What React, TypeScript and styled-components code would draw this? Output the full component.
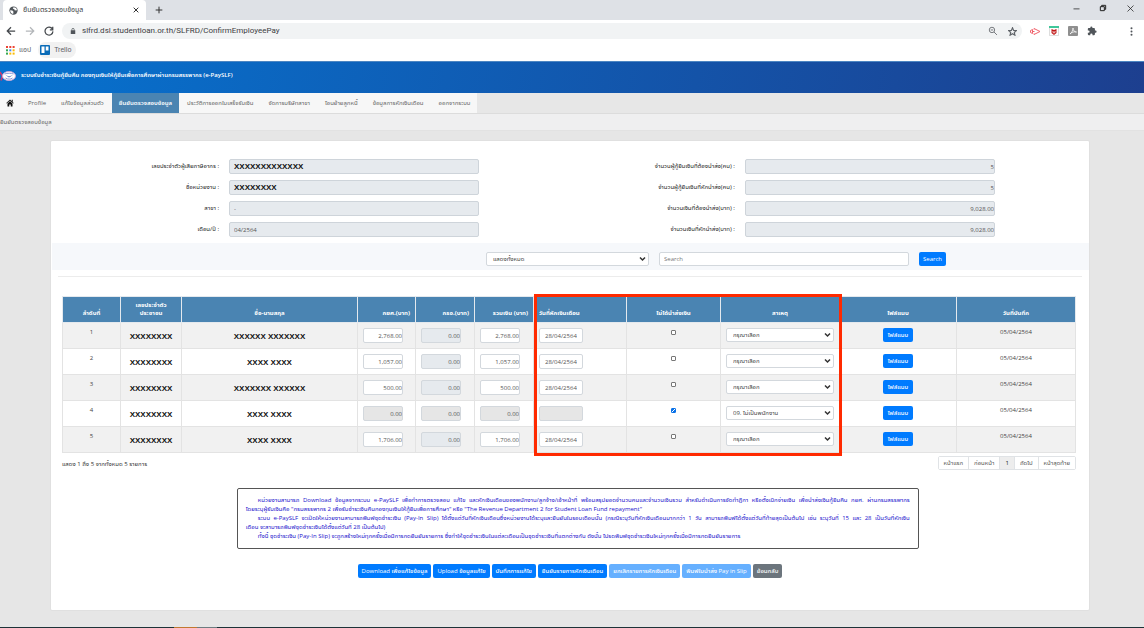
import React from "react";
import styled, { createGlobalStyle, css } from "styled-components";

const FONT = '"Open Sans", "Noto Sans Thai", "Liberation Sans", sans-serif';
const UI_FONT = 'Roboto, "Noto Sans Thai", sans-serif';

const GlobalStyle = createGlobalStyle`
  * { box-sizing: border-box; }
  html, body { margin: 0; padding: 0; }
  body { background: #e6e6e6; font-family: ${FONT}; font-size: 6px; line-height: 9px; color: #333; }
  button, input, select { font: inherit; margin: 0; }
`;

const Page = styled.div`
  min-height: 100vh;
  display: flex;
  flex-direction: column;
`;

/* ---------- browser frame ---------- */
const TabStrip = styled.div`
  height: 20px;
  background: #dee1e6;
  display: flex;
  align-items: flex-end;
  padding-left: 3px;
  font-family: ${UI_FONT};
`;
const Tab = styled.div`
  width: 143px;
  height: 20px;
  background: #fff;
  border-radius: 4px 4px 0 0;
  display: flex;
  align-items: center;
  gap: 5px;
  padding: 0 4px 0 6px;
  color: #3c4043;
`;
const TabTitle = styled.span`
  flex: 1;
  font-size: 7px;
  white-space: nowrap;
`;
const IconButton = styled.button`
  border: 0;
  padding: 0;
  background: none;
  display: flex;
  align-items: center;
  justify-content: center;
  width: 12px;
  height: 12px;
  flex: none;
`;
const NewTab = styled(IconButton)`
  margin: 0 0 4px 7px;
`;
const WindowButtons = styled.div`
  margin-left: auto;
  display: flex;
  gap: 15px;
  padding: 0 8px 6px 0;
`;
const Toolbar = styled.div`
  height: 22px;
  background: #fff;
  display: flex;
  align-items: center;
  padding: 0 7px 0 5px;
  gap: 7px;
  font-family: ${UI_FONT};
`;
const AddressBar = styled.div`
  flex: 1;
  height: 16px;
  border-radius: 8px;
  background: #f1f3f4;
  display: flex;
  align-items: center;
  gap: 7px;
  padding: 0 4px 0 5px;
`;
const SiteInfo = styled(IconButton)`
  margin-right: -4px;
`;
const Address = styled.input`
  flex: 1;
  border: 0;
  padding: 0;
  background: none;
  font-size: 8px;
  line-height: 12px;
  color: #3c4043;
  outline: none;
`;
const Extensions = styled.div`
  display: flex;
  gap: 7px;
  margin-right: 20px;
`;
const Bookmarks = styled.div`
  height: 19px;
  background: #fff;
  display: flex;
  align-items: flex-start;
  gap: 3px;
  padding: 0 4px;
  font-family: ${UI_FONT};
`;
const Bookmark = styled.a<{ $active?: boolean }>`
  display: flex;
  align-items: center;
  gap: 4px;
  height: 16px;
  padding: 0 4px 0 2px;
  border-radius: 8px;
  color: #5f6368;
  text-decoration: none;
  font-size: 7px;
  background: ${(p) => (p.$active ? "#f1f1f1" : "none")};
`;

/* ---------- site header ---------- */
const Header = styled.header`
  height: 32px;
  border-top: 1px solid #4d86c2;
  background: linear-gradient(100deg, #0672cf 0%, #1d3f8f 100%);
  color: #fff;
  display: flex;
  align-items: center;
  gap: 4px;
  padding-bottom: 4px;
`;
const SiteTitle = styled.h1`
  margin: 0;
  font-size: 6px;
  line-height: 9px;
  font-weight: 600;
`;
const Nav = styled.nav`
  height: 21px;
  border-bottom: 1px solid #dcdcdc;
  display: flex;
  background: #e7e7e7;
`;
const NavItems = styled.div`
  display: flex;
  gap: 1px;
  background: #f7f7f7;
`;
const NavLink = styled.a<{ $active?: boolean }>`
  display: flex;
  align-items: center;
  padding: 0 7px;
  color: ${(p) => (p.$active ? "#fff" : "#666")};
  font-weight: ${(p) => (p.$active ? 600 : 400)};
  background: ${(p) => (p.$active ? "#4a84b2" : "none")};
  text-decoration: none;
  white-space: nowrap;
  &:first-child { padding: 0 6px; }
`;
const Breadcrumb = styled.div`
  height: 17px;
  background: #efeff0;
  border-bottom: 1px solid #e2e2e2;
  display: flex;
  align-items: center;
  color: #666;
`;

/* ---------- card ---------- */
const Card = styled.main`
  margin: 9px 54px 16px 50px;
  background: #fff;
  border: 1px solid #e0e0e0;
  border-radius: 2px;
  flex: 1;
`;
const Summary = styled.form`
  display: grid;
  grid-template-columns: 178px 26.5% 1fr 26.5%;
  row-gap: 6px;
  padding: 18px 94px 6px 0;
`;
const Label = styled.label`
  align-self: center;
  text-align: right;
  padding-right: 10px;
  color: #222;
`;
const Field = styled.input<{ $strong?: boolean; $right?: boolean }>`
  width: 100%;
  height: 15px;
  border: 1px solid #ced4da;
  border-radius: 2px;
  background: #e6eaee;
  color: #555;
  padding: 0 ${(p) => (p.$right ? 0 : 4)}px;
  text-align: ${(p) => (p.$right ? "right" : "left")};
  ${(p) =>
    p.$strong &&
    css`
      font-family: "Liberation Sans", sans-serif;
      font-weight: 700;
      font-size: 8px;
      color: #111;
    `}
`;
const SearchBar = styled.form`
  height: 27px;
  margin: 0 0 6px 1px;
  background: #f6f8fb;
  display: flex;
  justify-content: flex-end;
  align-items: center;
  gap: 10px;
  padding: 5px 143px 0 0;
`;
const SelectBox = styled.div`
  position: relative;
  display: flex;
`;
const Select = styled.select`
  appearance: none;
  width: 100%;
  height: 14px;
  border: 1px solid #d3d8dd;
  border-radius: 2px;
  background: #fff;
  padding: 0 6px;
  color: #444;
`;
const Caret = styled.svg`
  position: absolute;
  right: 3px;
  top: 4px;
  pointer-events: none;
`;
const FilterBox = styled(SelectBox)`
  width: 163px;
`;
const SearchInput = styled.input`
  width: 250px;
  height: 14px;
  border: 1px solid #d3d8dd;
  border-radius: 2px;
  padding: 0 4px;
  &::placeholder { color: #777; opacity: 1; }
`;
const Button = styled.button<{ $tone?: "primary" | "light" | "grey"; $roomy?: boolean }>`
  height: 14px;
  border: 0;
  border-radius: 2px;
  padding: 0 ${(p) => (p.$roomy ? 5 : 4)}px;
  color: #fff;
  font-weight: 500;
  white-space: nowrap;
  background: ${(p) => (p.$tone === "grey" ? "#6c757d" : p.$tone === "light" ? "#66b0ff" : "#007bff")};
`;
const Divider = styled.hr`
  margin: 0 7px 19px;
  border: 0;
  border-top: 1px solid #ececec;
`;
const TableWrap = styled.div`
  position: relative;
  margin: 0 13px 0 11px;
`;
const Table = styled.table`
  width: 100%;
  table-layout: fixed;
  border-collapse: collapse;
`;
const Th = styled.th<{ $align?: string }>`
  height: 26px;
  background: #4a84b2;
  color: #fff;
  font-weight: 700;
  line-height: 8px;
  vertical-align: bottom;
  border: 1px solid #e4e9ee;
  padding: 0 5px 5px;
  text-align: ${(p) => p.$align || "center"};
`;
const Row = styled.tr`
  background: #fff;
  &:nth-child(odd) { background: #f1f1f1; }
`;
const Td = styled.td<{ $middle?: boolean }>`
  height: 26px;
  border: 1px solid #e3e3e3;
  text-align: center;
  vertical-align: ${(p) => (p.$middle ? "middle" : "top")};
  padding: ${(p) => (p.$middle ? 2 : 5)}px 5px 0;
  color: #444;
`;
const Masked = styled.span`
  display: block;
  font: 700 8px/12px "Liberation Sans", sans-serif;
  color: #111;
`;
const CellInput = styled.input<{ $wide?: boolean; $right?: boolean }>`
  display: block;
  width: ${(p) => (p.$wide ? 44 : 40)}px;
  height: 15px;
  border: 1px solid #d3d8dd;
  border-radius: 2px;
  background: #fff;
  color: #555;
  text-align: ${(p) => (p.$right ? "right" : "left")};
  padding: 0 ${(p) => (p.$right ? 0 : 5)}px;
  &:read-only { background: #e6eaee; }
  &:disabled { background: #e6e6e6; }
`;
const Check = styled.input`
  appearance: none;
  display: block;
  width: 5px;
  height: 5px;
  margin: 2px auto 0;
  border: 1px solid #777;
  border-radius: 1px;
  background: #fff;
  &:checked {
    border-color: #0a72e8;
    background: #0a72e8 linear-gradient(135deg, transparent 40%, #fff 40%, #fff 60%, transparent 60%);
  }
`;
const Highlight = styled.div`
  position: absolute;
  left: 46.5%;
  right: 23.1%;
  top: -2px;
  bottom: -3px;
  border: 3px solid #ff2a00;
  pointer-events: none;
`;
const TableFooter = styled.div`
  display: flex;
  justify-content: space-between;
  align-items: flex-start;
  margin: 3px 13px 18px 11px;
`;
const Count = styled.span`
  margin-top: 4px;
`;
const Pager = styled.div`
  display: flex;
  border: 1px solid #e0e3e6;
  border-radius: 2px;
`;
const PageButton = styled.button<{ $current?: boolean }>`
  height: 12px;
  border: 0;
  border-left: 1px solid #e0e3e6;
  padding: 0 5px;
  background: ${(p) => (p.$current ? "#ededed" : "#fff")};
  color: ${(p) => (p.$current ? "#222" : "#555")};
  &:first-child { border-left: 0; }
`;
const Notice = styled.section`
  margin: 0 16.4% 15px 17.9%;
  border: 1px solid #555;
  border-radius: 2px;
  padding: 7px 8px;
  color: #2111cc;
  text-align: justify;
`;
const Paragraph = styled.p`
  margin: 0;
  text-indent: 12px;
`;
const Phrase = styled.span`
  white-space: nowrap;
`;
const Actions = styled.div`
  display: flex;
  justify-content: center;
  gap: 2px;
  padding: 0 0 32px;
`;
const Taskbar = styled.footer`
  height: 1px;
  background: linear-gradient(90deg, #1d3338 15.2%, #c07830 15.2%, #c07830 17.2%, #6d7c80 17.2%, #6d7c80 19%, #1d3338 19%);
`;

const people = [
  { name: "XXXXXX XXXXXXX", amount: "2,768.00", date: "28/04/2564" },
  { name: "XXXX XXXX", amount: "1,057.00", date: "28/04/2564" },
  { name: "XXXXXXX XXXXXX", amount: "500.00", date: "28/04/2564" },
  { name: "XXXX XXXX", amount: "0.00", date: "", skipped: true },
  { name: "XXXX XXXX", amount: "1,706.00", date: "28/04/2564" },
];

const summary = [
  ["เลขประจำตัวผู้เสียภาษีอากร :", "XXXXXXXXXXXXX", "จำนวนผู้กู้ยืมเงินที่ต้องนำส่ง(คน) :", "5"],
  ["ชื่อหน่วยงาน :", "XXXXXXXX", "จำนวนผู้กู้ยืมเงินที่หักนำส่ง(คน) :", "5"],
  ["สาขา :", "-", "จำนวนเงินที่ต้องนำส่ง(บาท) :", "9,028.00"],
  ["เดือน/ปี :", "04/2564", "จำนวนเงินที่หักนำส่ง(บาท) :", "9,028.00"],
];

const columns: [string, number, string?][] = [
  ["ลำดับที่", 58],
  ["เลขประจำตัวประชาชน", 61],
  ["ชื่อ-นามสกุล", 176],
  ["กยศ.(บาท)", 58, "right"],
  ["กรอ.(บาท)", 59, "right"],
  ["รวมเงิน (บาท)", 59, "right"],
  ["วันที่หักเงินเดือน", 93, "left"],
  ["ไม่ได้นำส่งเงิน", 94],
  ["สาเหตุ", 119],
  ["ไฟล์แนบ", 117],
  ["วันที่บันทึก", 119],
];
const totalWidth = columns.reduce((sum, c) => sum + c[1], 0);

const navItems = [
  "Profile",
  "แก้ไขข้อมูลส่วนตัว",
  "ยืนยันตรวจสอบข้อมูล",
  "ประวัติการออกใบเสร็จรับเงิน",
  "จัดการบริษัทสาขา",
  "โอนย้ายลูกหนี้",
  "ข้อมูลการหักเงินเดือน",
  "ออกจากระบบ",
];

const Stroke = ({ d, size = 10, color = "#5f6368", width = 2 }: { d: string; size?: number; color?: string; width?: number }) => (
  <svg width={size} height={size} viewBox="0 0 24 24" fill="none" stroke={color} strokeWidth={width} aria-hidden>
    <path d={d} />
  </svg>
);

const Chevron = () => (
  <Caret width="7" height="6" viewBox="0 0 7 6" fill="none" stroke="#333" strokeWidth="1.5">
    <path d="M1 1.5l2.500 2.500 2.500-2.500" />
  </Caret>
);

const appColours = ["#ea4335", "#ea4335", "#ea4335", "#34a853", "#4285f4", "#fbbc04", "#34a853", "#fbbc04", "#fbbc04"];

export default function App() {
  return (
    <Page>
      <GlobalStyle />
      <TabStrip>
        <Tab>
          <svg width="9" height="9" viewBox="0 0 24 24" aria-hidden>
            <circle cx="12" cy="12" r="11" fill="#50555a" />
            <path d="M3 11l6 1 3 3-1 6c-5-1-8-5-8-10zM12 3l-2 4 4 1 1 3 5 1 1-3c-1-4-5-6-9-6z" fill="#fff" />
          </svg>
          <TabTitle>ยืนยันตรวจสอบข้อมูล</TabTitle>
          <IconButton aria-label="Close tab"><Stroke d="M5 5l14 14M19 5L5 19" size={8} color="#333" width={3} /></IconButton>
        </Tab>
        <NewTab aria-label="New tab"><Stroke d="M12 2v20M2 12h20" size={8} color="#333" width={3} /></NewTab>
        <WindowButtons>
          <IconButton aria-label="Minimize"><Stroke d="M4 13h16" size={9} color="#222" /></IconButton>
          <IconButton aria-label="Restore"><Stroke d="M4 8h12v12H4zM8 8V4h12v12h-4" size={8} color="#222" width={3} /></IconButton>
          <IconButton aria-label="Close"><Stroke d="M4 4l16 16M20 4L4 20" size={9} color="#222" /></IconButton>
        </WindowButtons>
      </TabStrip>
      <Toolbar>
        <IconButton aria-label="Back"><Stroke d="M22 12H3M12 3l-9 9 9 9" color="#45494d" width={3} /></IconButton>
        <IconButton aria-label="Forward"><Stroke d="M2 12h19M12 3l9 9-9 9" color="#b4b7ba" width={3} /></IconButton>
        <IconButton aria-label="Reload"><Stroke d="M20 7a9.500 9.500 0 1 0 1.500 6M21 2v7h-7" color="#45494d" width={3} /></IconButton>
        <AddressBar>
          <SiteInfo aria-label="Site information">
            <svg width="6" height="8" viewBox="0 0 16 18" aria-hidden>
              <path d="M2 7h12v10H2z" fill="#50555a" />
              <path d="M5 8V5a3 3 0 0 1 6 0v3" fill="none" stroke="#50555a" strokeWidth="2" />
            </svg>
          </SiteInfo>
          <Address aria-label="Address" defaultValue="slfrd.dsl.studentloan.or.th/SLFRD/ConfirmEmployeePay" />
          <IconButton aria-label="Zoom"><Stroke d="M16 9.500a6.500 6.500 0 1 1-13 0a6.500 6.500 0 0 1 13 0zM14.500 14.500l7 7M6.500 9.500h6" size={10} /></IconButton>
          <IconButton aria-label="Bookmark"><Stroke d="M12 2l3 7 7.500.6-5.700 5 1.700 7.400L12 18l-6.500 4 1.700-7.400-5.700-5L9 9z" size={9} width={3} /></IconButton>
        </AddressBar>
        <Extensions>
          <IconButton aria-label="Send">
            <svg width="11" height="9" viewBox="0 0 22 18" fill="none" stroke="#f0606a" strokeWidth="2" aria-hidden>
              <path d="M8 5V3l12 6-12 6v-2M1 7l4-2v8l-4-2zM5 9h4" />
            </svg>
          </IconButton>
          <IconButton aria-label="WebAdvisor">
            <svg width="10" height="10" viewBox="0 0 20 20" aria-hidden>
              <path d="M1 1h18v18H1z" fill="#fff" stroke="#bbb" />
              <path d="M0 0h20v4H0z" fill="#3fc79a" />
              <path d="M5 6l5 2 5-2v8l-5 4-5-4z" fill="#c01818" />
              <path d="M8 10v3l2 1 2-1v-3" fill="none" stroke="#fff" strokeWidth="1.500" />
            </svg>
          </IconButton>
          <IconButton aria-label="Acrobat">
            <svg width="10" height="10" viewBox="0 0 20 20" aria-hidden>
              <rect width="20" height="20" rx="2" fill="#8f8f8f" />
              <path d="M4 16c3-2 6-7 6-12 0 5 3 8 7 8-5-1-9 0-13 4z" fill="none" stroke="#fff" strokeWidth="1.500" />
            </svg>
          </IconButton>
          <IconButton aria-label="Extensions">
            <svg width="10" height="10" viewBox="0 0 24 24" aria-hidden>
              <path d="M20.500 11H19V7a2 2 0 0 0-2-2h-4V3.500a2.500 2.500 0 0 0-5 0V5H4a2 2 0 0 0-2 2v3.800h1.500a2.700 2.700 0 0 1 0 5.400H2V20a2 2 0 0 0 2 2h3.800v-1.500a2.700 2.700 0 0 1 5.400 0V22H17a2 2 0 0 0 2-2v-4h1.500a2.500 2.500 0 0 0 0-5z" fill="#50555a" />
            </svg>
          </IconButton>
        </Extensions>
        <IconButton aria-label="Menu">
          <svg width="3" height="9" viewBox="0 0 3 9" fill="#50555a" aria-hidden>
            <circle cx="1.500" cy="1.200" r="1" /><circle cx="1.500" cy="4.500" r="1" /><circle cx="1.500" cy="7.800" r="1" />
          </svg>
        </IconButton>
      </Toolbar>
      <Bookmarks>
        <Bookmark href="#apps">
          <svg width="9" height="9" viewBox="0 0 9 9" aria-hidden>
            {appColours.map((c, i) => (
              <rect key={i} x={(i % 3) * 3.3} y={Math.floor(i / 3) * 3.3} width="2" height="2" fill={c} />
            ))}
          </svg>
          แอป
        </Bookmark>
        <Bookmark href="#trello" $active>
          <svg width="10" height="10" viewBox="0 0 20 20" aria-hidden>
            <rect width="20" height="20" rx="2" fill="#0b6cb8" />
            <path d="M3 3h6v13H3zM11.500 3h5.500v8h-5.500z" fill="#fff" />
          </svg>
          Trello
        </Bookmark>
      </Bookmarks>

      <Header>
        <svg width="17" height="12" viewBox="0 0 34 24" aria-hidden>
          <path d="M0 4l5 8-3 9" fill="none" stroke="#d4376a" strokeWidth="3" />
          <ellipse cx="18" cy="12" rx="13" ry="9" fill="#fff" stroke="#c9a6d8" strokeWidth="2" />
          <path d="M9 8c6-2 13-2 18 0M11 16c5 3 10 3 14 0" fill="none" stroke="#8b9bd8" strokeWidth="2" />
          <path d="M11 10l7 3 8-3-8 5z" fill="#4262bd" />
        </svg>
        <SiteTitle>ระบบรับชำระเงินกู้ยืมคืน กองทุนเงินให้กู้ยืมเพื่อการศึกษาผ่านกรมสรรพากร (e-PaySLF)</SiteTitle>
      </Header>
      <Nav>
        <NavItems>
          <NavLink href="#home" aria-label="Home">
            <svg width="8" height="8" viewBox="0 0 16 16" fill="#111" aria-hidden>
              <path d="M8 1l7.500 7-1 1L8 3.500 1.500 9l-1-1zM11.500 1.500h2V6l-2-2zM3 9l5-4.500L13 9v6H9.500v-4h-3v4H3z" />
            </svg>
          </NavLink>
          {navItems.map((item, i) => (
            <NavLink key={item} href={`#nav-${i}`} $active={i === 2}>{item}</NavLink>
          ))}
        </NavItems>
      </Nav>
      <Breadcrumb>ยืนยันตรวจสอบข้อมูล</Breadcrumb>

      <Card>
        <Summary>
          {summary.map(([leftLabel, left, rightLabel, right], i) => (
            <React.Fragment key={leftLabel}>
              <Label htmlFor={`l${i}`}>{leftLabel}</Label>
              <Field id={`l${i}`} readOnly value={left} $strong={i < 2} />
              <Label htmlFor={`r${i}`}>{rightLabel}</Label>
              <Field id={`r${i}`} readOnly value={right} $right />
            </React.Fragment>
          ))}
        </Summary>
        <SearchBar>
          <FilterBox>
            <Select aria-label="แสดงทั้งหมด"><option>แสดงทั้งหมด</option></Select>
            <Chevron />
          </FilterBox>
          <SearchInput aria-label="Search" placeholder="Search" />
          <Button type="button">Search</Button>
        </SearchBar>
        <Divider />
        <TableWrap>
          <Table>
            <colgroup>
              {columns.map(([title, width]) => (
                <col key={title} style={{ width: `${(width / totalWidth) * 100}%` }} />
              ))}
            </colgroup>
            <thead>
              <tr>
                {columns.map(([title, , align], i) => (
                  <Th key={title} $align={align}>
                    {i === 1 ? <>เลขประจำตัว<br />ประชาชน</> : title}
                  </Th>
                ))}
              </tr>
            </thead>
            <tbody>
              {people.map((p, i) => (
                <Row key={i}>
                  <Td>{i + 1}</Td>
                  <Td $middle><Masked>XXXXXXXX</Masked></Td>
                  <Td $middle><Masked>{p.name}</Masked></Td>
                  <Td><CellInput aria-label="กยศ." defaultValue={p.amount} disabled={p.skipped} $right /></Td>
                  <Td><CellInput aria-label="กรอ." defaultValue="0.00" readOnly disabled={p.skipped} $right /></Td>
                  <Td><CellInput aria-label="รวมเงิน" defaultValue={p.amount} disabled={p.skipped} $right /></Td>
                  <Td><CellInput aria-label="วันที่หักเงินเดือน" defaultValue={p.date} disabled={p.skipped} $wide /></Td>
                  <Td><Check type="checkbox" aria-label="ไม่ได้นำส่งเงิน" defaultChecked={p.skipped} /></Td>
                  <Td>
                    <SelectBox>
                      <Select aria-label="สาเหตุ"><option>{p.skipped ? "09. ไม่เป็นพนักงาน" : "กรุณาเลือก"}</option></Select>
                      <Chevron />
                    </SelectBox>
                  </Td>
                  <Td><Button type="button" $roomy>ไฟล์แนบ</Button></Td>
                  <Td>05/04/2564</Td>
                </Row>
              ))}
            </tbody>
          </Table>
          <Highlight />
        </TableWrap>
        <TableFooter>
          <Count>แสดง 1 ถึง 5 จากทั้งหมด 5 รายการ</Count>
          <Pager>
            {["หน้าแรก", "ก่อนหน้า", "1", "ถัดไป", "หน้าสุดท้าย"].map((label) => (
              <PageButton key={label} type="button" $current={label === "1"}>{label}</PageButton>
            ))}
          </Pager>
        </TableFooter>
        <Notice>
          <Paragraph>
            หน่วยงานสามารถ Download ข้อมูลจากระบบ e-PaySLF เพื่อทำการตรวจสอบ แก้ไข และหักเงินเดือนของพนักงาน/ลูกจ้าง/เจ้าหน้าที่ พร้อมสรุปยอดจำนวนคนและจำนวนเงินรวม สำหรับดำเนินการจัดทำฎีกา หรือตั้งเบิกจ่ายเงิน เพื่อนำส่งเงินกู้ยืมคืน กยศ. ผ่านกรมสรรพากร{" "}
            <Phrase>โดยระบุผู้รับเงินคือ</Phrase> "กรมสรรพากร 2 เพื่อรับชำระเงินคืนกองทุนเงินให้กู้ยืมเพื่อการศึกษา" หรือ "The Revenue Department 2 for Student Loan Fund repayment"
          </Paragraph>
          <Paragraph>
            ระบบ e-PaySLF จะเปิดให้หน่วยงานสามารถพิมพ์ชุดชำระเงิน (Pay-In Slip) ได้ตั้งแต่วันที่หักเงินเดือนซึ่งหน่วยงานได้ระบุและยืนยันในรอบเดือนนั้น (กรณีระบุวันที่หักเงินเดือนมากกว่า 1 วัน สามารถพิมพ์ได้ตั้งแต่วันที่ท้ายสุดเป็นต้นไป เช่น ระบุวันที่ 15 และ 28 เป็นวันที่หักเงิน<wbr /><Phrase>เดือน จะสามารถพิมพ์ชุดชำระเงิน</Phrase>ได้ตั้งแต่วันที่ 28 เป็นต้นไป)
          </Paragraph>
          <Paragraph>
            ทั้งนี้ ชุดชำระเงิน (Pay-In Slip) จะถูกสร้างใหม่ทุกครั้งเมื่อมีการกดยืนยันรายการ ซึ่งทำให้ชุดชำระเงินในแต่ละเดือนเป็นชุดชำระเงินที่แตกต่างกัน ดังนั้น โปรดพิมพ์ชุดชำระเงินใหม่ทุกครั้งเมื่อมีการกดยืนยันรายการ
          </Paragraph>
        </Notice>
        <Actions>
          <Button type="button">Download เพื่อแก้ไขข้อมูล</Button>
          <Button type="button">Upload ข้อมูลแก้ไข</Button>
          <Button type="button">บันทึกการแก้ไข</Button>
          <Button type="button">ยืนยันรายการหักเงินเดือน</Button>
          <Button type="button" $tone="light">ยกเลิกรายการหักเงินเดือน</Button>
          <Button type="button" $tone="light">พิมพ์ใบนำส่ง Pay in Slip</Button>
          <Button type="button" $tone="grey">ย้อนกลับ</Button>
        </Actions>
      </Card>
      <Taskbar />
    </Page>
  );
}
